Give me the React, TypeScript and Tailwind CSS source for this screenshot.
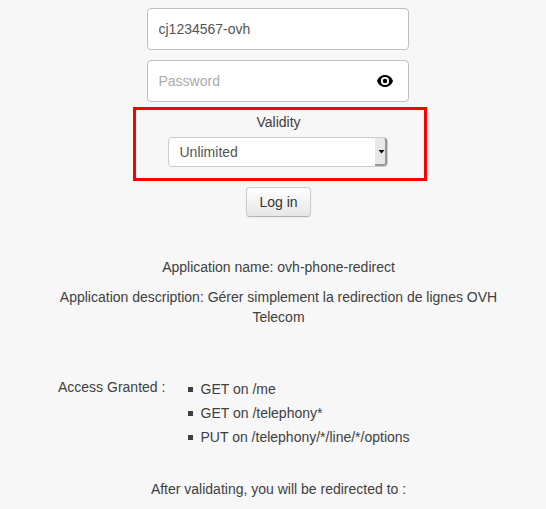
const permissions = ['GET on /me', 'GET on /telephony*', 'PUT on /telephony/*/line/*/options'];

export default function App() {
  return (
    <main className="flex h-[509px] w-[546px] flex-col items-center overflow-hidden bg-[#f7f7f7] pt-2 pl-[10px] font-['Liberation_Sans',Arial,sans-serif] text-sm leading-5 text-[#404040]">
      <input
        defaultValue="cj1234567-ovh"
        aria-label="Account"
        className="h-[42px] w-[262px] shrink-0 rounded border border-[#bfbfbf] bg-white px-[10.5px] text-[#555] outline-none"
      />
      <div className="mt-[10px] flex h-[42px] w-[262px] shrink-0 items-center rounded border border-[#bfbfbf] bg-white pr-[15px] pl-[10.5px]">
        <input type="password" placeholder="Password" className="min-w-0 flex-1 outline-none placeholder:text-[#aaa]" />
        <svg width="16" height="12" viewBox="0 0 16 12" aria-label="Show password">
          <path d="M0 6C1.3 2.3 4.3 0 8 0s6.700 2.300 8 6c-1.300 3.700-4.300 6-8 6S1.300 9.700 0 6Z" fill="#000" />
          <circle cx="8" cy="6" r="4.100" fill="#fff" />
          <circle cx="8" cy="6" r="2.200" fill="#000" />
        </svg>
      </div>
      <section className="mt-[5px] ml-[4px] flex h-[74px] w-[294px] shrink-0 flex-col items-center border-[3px] border-[#f00] pt-[2px] pr-[4px]">
        <label className="ml-[1px]">Validity</label>
        <button className="mt-[5px] flex h-[30px] w-[220px] items-stretch justify-between rounded border border-[#ccc] bg-white pl-[10.5px] text-left text-[#555]">
          <span className="self-center">Unlimited</span>
          <span className="flex w-[12px] items-center justify-end rounded-r-[3px] border-r-2 border-b-2 border-[#999] bg-[#e8e8e6]">
            <svg width="7" height="4" viewBox="0 0 7 4" className="mt-px">
              <path d="M.5 0h6L3.500 3.600Z" fill="#000" />
            </svg>
          </span>
        </button>
      </section>
      <button className="mt-[6px] ml-[1px] h-[30px] w-[65px] shrink-0 rounded border border-[#ccc] border-b-[#b3b3b3] bg-linear-to-b from-white to-[#e6e6e6] text-[#333] shadow-[inset_0_1px_0_rgba(255,255,255,.2),0_1px_2px_rgba(0,0,0,.05)]">
        Log in
      </button>
      <p className="mt-10 ml-[1px] shrink-0">Application name: ovh-phone-redirect</p>
      <p className="mt-[10px] ml-[1px] w-[460px] shrink-0 text-center">
        Application description: Gérer simplement la redirection de lignes OVH Telecom
      </p>
      <section className="mt-[50px] flex w-[440px] shrink-0 items-start">
        <span className="w-[130px]">Access Granted :</span>
        <ul className="mt-[2px] flex flex-col gap-1">
          {permissions.map((permission) => (
            <li key={permission} className="flex items-center">
              <span className="mt-px mr-[7.5px] size-[5px] bg-[#404040]" />
              {permission}
            </li>
          ))}
        </ul>
      </section>
      <p className="mt-8 ml-[1px] shrink-0">After validating, you will be redirected to :</p>
    </main>
  );
}
